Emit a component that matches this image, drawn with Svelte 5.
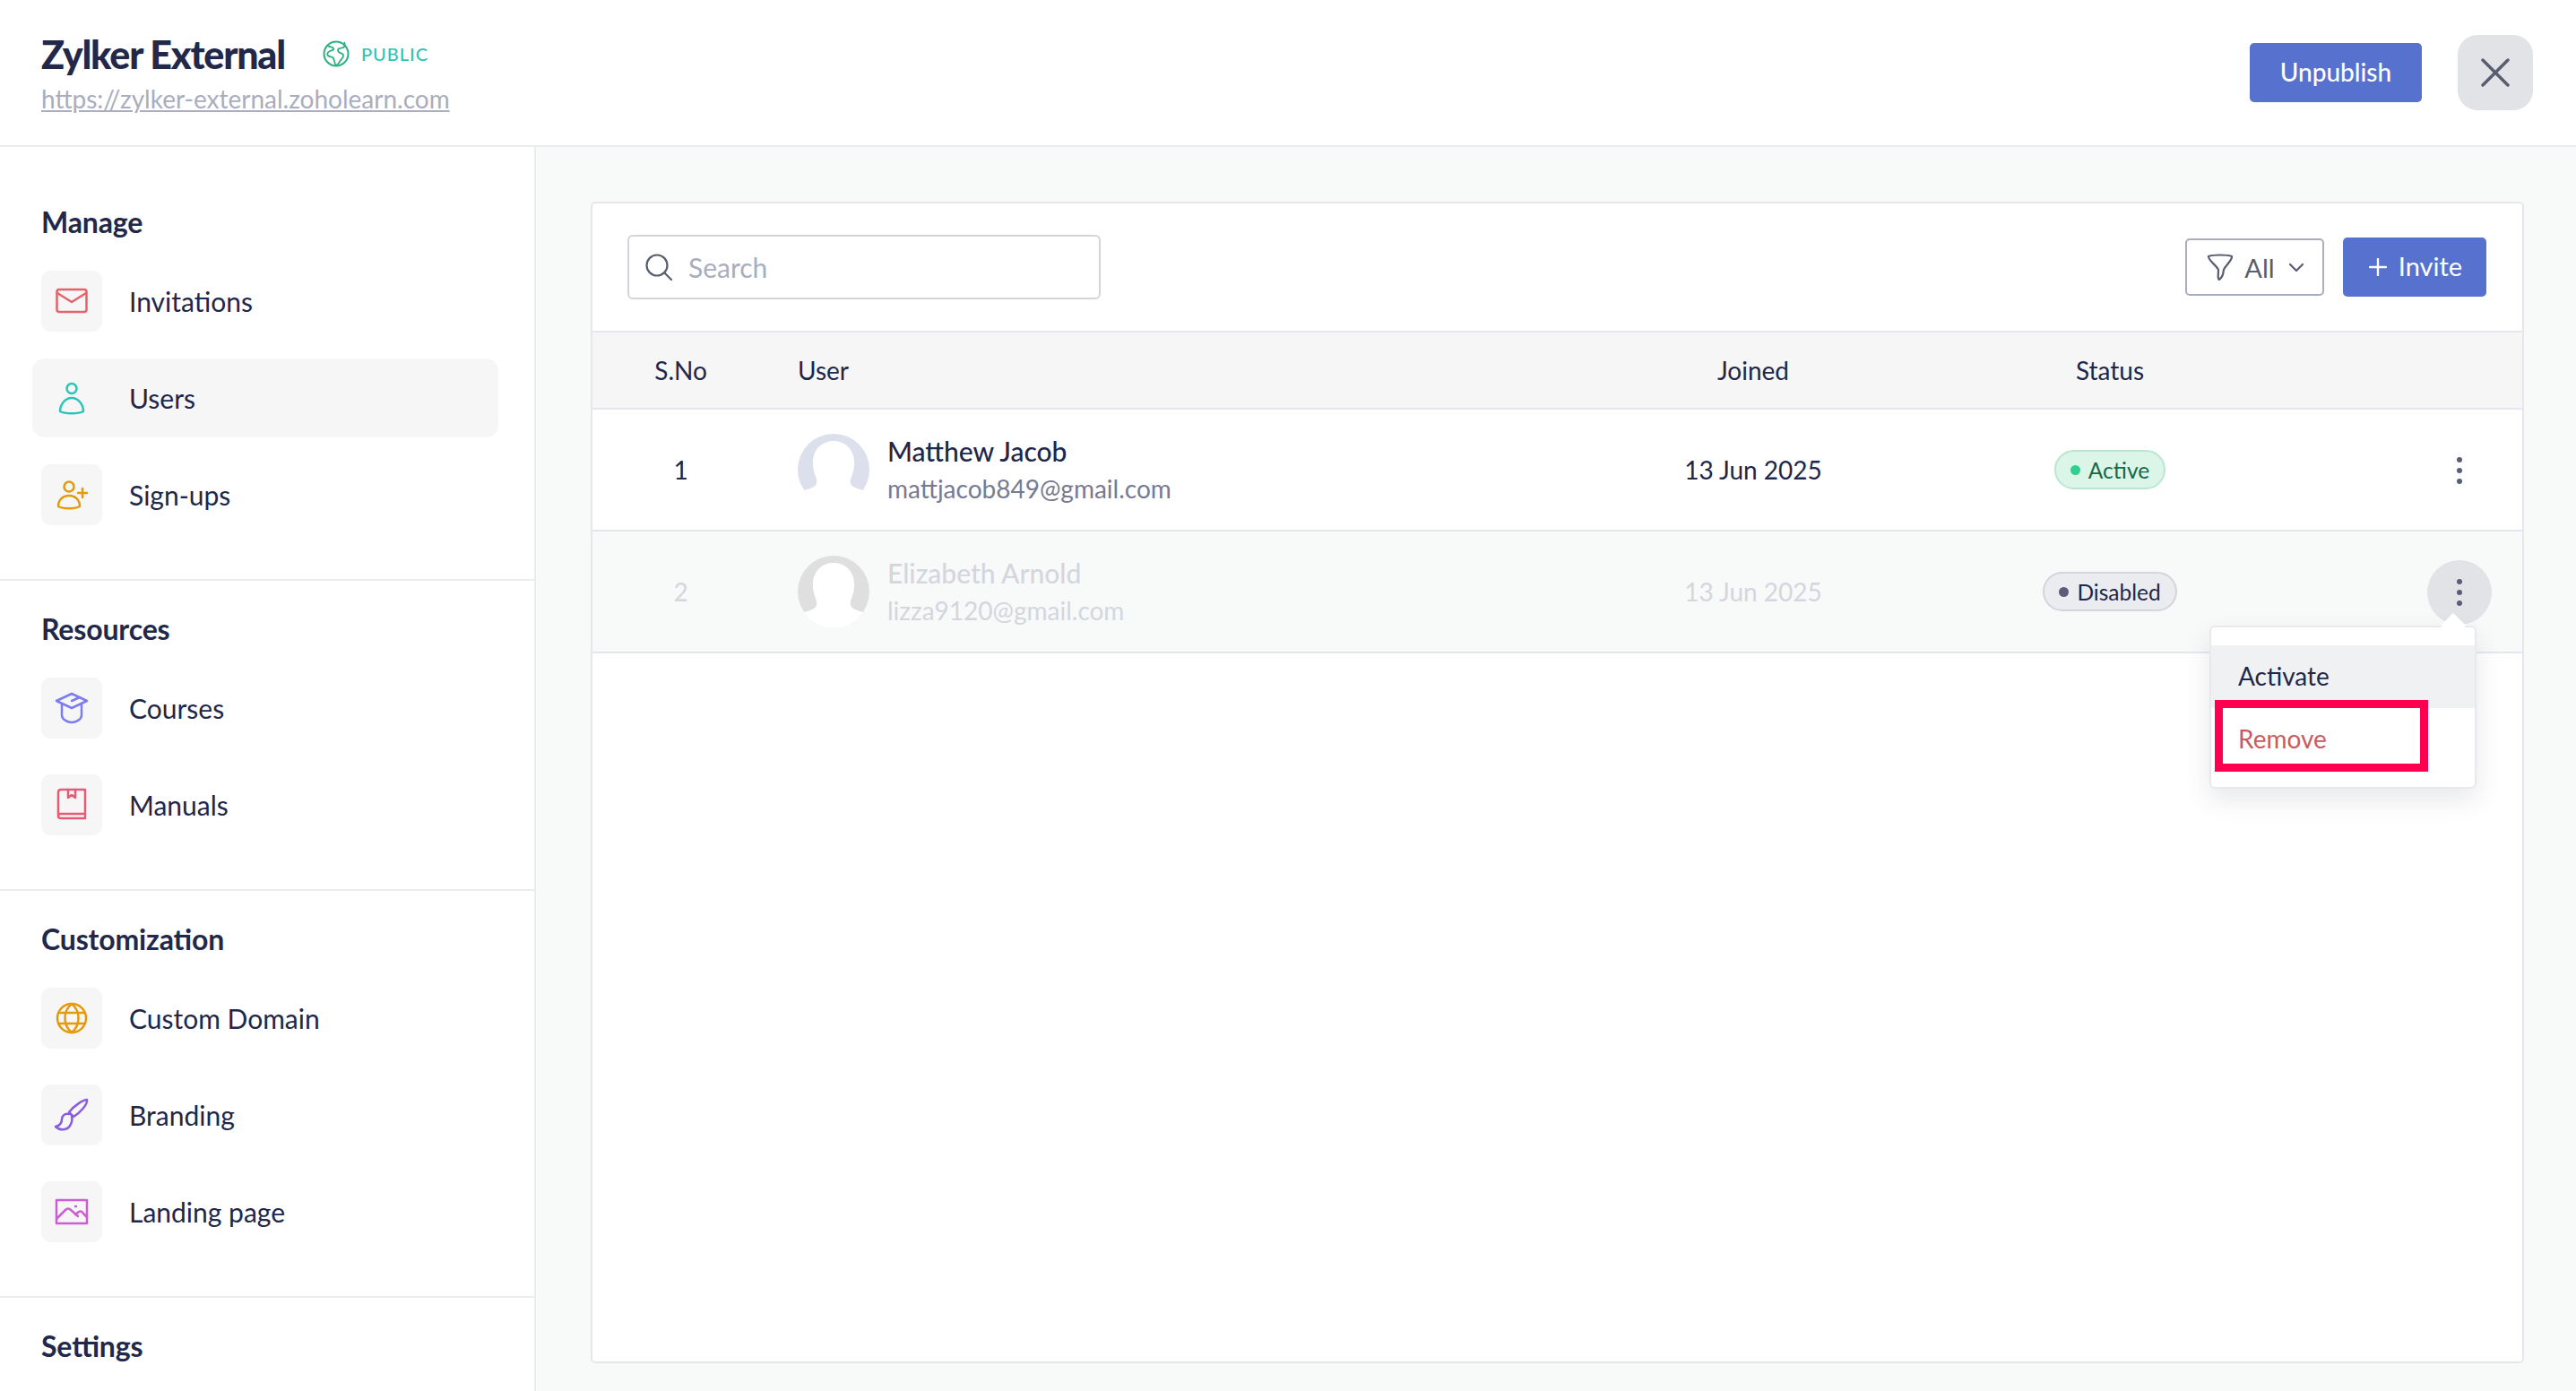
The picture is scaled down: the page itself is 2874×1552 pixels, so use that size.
<script>
  const groups = [
    {
      title: 'Manage',
      items: [
        { label: 'Invitations', color: '#e2636b', shapes: ['M6 7h28a2.500 2.500 0 0 1 2.500 2.500v20a2.500 2.500 0 0 1-2.500 2.500H6a2.500 2.500 0 0 1-2.500-2.500v-20A2.500 2.500 0 0 1 6 7Z', 'M4 11l16 10 16-10'] },
        { label: 'Users', color: '#2ac4b8', active: true, shapes: ['M20 4a5.500 5.500 0 1 1 0 11 5.500 5.500 0 0 1 0-11Z', 'M7 35c0-8 6-15 13-15s13 7 13 15c-5 3-21 3-26 0Z'] },
        { label: 'Sign-ups', color: '#e59a0c', shapes: ['M17 5.500a5.500 5.500 0 1 1 0 11 5.500 5.500 0 0 1 0-11Z', 'M5 33c0-7 5-12 12-12s12 5 12 12c-5 3-19 3-24 0Z', 'M32 13v10M27 18h10'] }
      ]
    },
    {
      title: 'Resources',
      items: [
        { label: 'Courses', color: '#7c7cf0', shapes: ['M20 4l17 8-17 8-17-8 17-8Z', 'M9 16v12c0 5 7 8 11 8s11-3 11-8V16', 'M20 12l9-4'] },
        { label: 'Manuals', color: '#e65a73', shapes: ['M5 33V6c0-2 1-3 3-3h27v32H8c-2 0-3-1-3-2.500S6 30 8 30h27', 'M16 3v9l4-3 4 3V3'] }
      ]
    },
    {
      title: 'Customization',
      items: [
        { label: 'Custom Domain', color: '#e59a0c', shapes: ['M20 4a16 16 0 1 1 0 32 16 16 0 0 1 0-32Z', 'M20 4c-10 8-10 24 0 32 10-8 10-24 0-32Z', 'M6 14h28M6 26h28'] },
        { label: 'Branding', color: '#8a5cdf', shapes: ['M37 3c-4 0-15 7-20 14l5 5c8-5 16-14 15-19Z', 'M17 19c-5-1-8 2-8 6 0 4-3 7-7 8 5 5 13 4 16-1 2-3 3-6 2-10'] },
        { label: 'Landing page', color: '#c95fd0', shapes: ['M3 7h34v26H3V7Z', 'M3 28l10-10c2-2 4-2 6 0l8 7', 'M24 23l4-3c2-1 4 0 5 2l4 4', 'M24 14h1'] }
      ]
    }
  ]

  const users = [
    { no: 1, name: 'Matthew Jacob', email: 'mattjacob849@gmail.com', joined: '13 Jun 2025', status: 'Active' },
    { no: 2, name: 'Elizabeth Arnold', email: 'lizza9120@gmail.com', joined: '13 Jun 2025', status: 'Disabled', off: true }
  ]
</script>

<div class="page">
  <header class="top">
    <div class="brand">
      <div class="brand-line">
        <h1>Zylker External</h1>
        <span class="public">
          <svg width="30" height="30" viewBox="0 0 30 30" fill="none" stroke="#2bb07f" stroke-width="2">
            <circle cx="15" cy="15" r="13.500" />
            <path d="M6 6c2 2 5 1 6 3s-2 2-4 3-4 3-2 5 5 1 6 3 1 6 3 8c3-1 4-5 6-7s3-5 1-6-5-1-5-4 4-2 6-3 2-4 1-6" stroke-width="1.800" />
          </svg>
          PUBLIC
        </span>
      </div>
      <a class="site" href="#site">https://zylker-external.zoholearn.com</a>
    </div>
    <div class="top-actions">
      <button class="primary unpublish">Unpublish</button>
      <button class="close" aria-label="Close">
        <svg width="32" height="32" viewBox="0 0 32 32" fill="none" stroke="#5a5d70" stroke-width="3.500" stroke-linecap="round">
          <path d="M2 2l28 28M30 2L2 30" />
        </svg>
      </button>
    </div>
  </header>

  <div class="body">
    <aside class="side">
      {#each groups as group}
        <section class="group">
          <h2>{group.title}</h2>
          <ul>
            {#each group.items as item}
              <li class:current={item.active}>
                <span class="tile">
                  <svg width="40" height="40" viewBox="0 0 40 40" fill="none" stroke={item.color} stroke-width="2.500" stroke-linecap="round" stroke-linejoin="round">
                    {#each item.shapes as d}
                      <path {d} />
                    {/each}
                  </svg>
                </span>
                {item.label}
              </li>
            {/each}
          </ul>
        </section>
      {/each}
      <section class="group">
        <h2>Settings</h2>
      </section>
    </aside>

    <main class="main">
      <div class="card">
        <div class="toolbar">
          <div class="search">
            <svg width="30" height="30" viewBox="0 0 30 30" fill="none" stroke="#5a5d70" stroke-width="2.200" stroke-linecap="round">
              <circle cx="13" cy="13" r="11.500" />
              <path d="M21.500 21.500L29 29" />
            </svg>
            <span>Search</span>
          </div>
          <button class="filter">
            <svg width="30" height="30" viewBox="0 0 30 30" fill="none" stroke="#5a5d70" stroke-width="2.200" stroke-linejoin="round">
              <path d="M2 3c6-2 20-2 26 0 1 4-7 10-9 15-1 4 0 7-5 11-2 0-1-7-1-11C11 13 1 7 2 3Z" />
            </svg>
            All
            <svg class="chev" width="18" height="11" viewBox="0 0 18 11" fill="none" stroke="#5a5d70" stroke-width="2.200" stroke-linecap="round" stroke-linejoin="round">
              <path d="M2 2l7 7 7-7" />
            </svg>
          </button>
          <button class="primary invite">
            <svg width="20" height="20" viewBox="0 0 20 20" fill="none" stroke="#fff" stroke-width="2.400" stroke-linecap="round">
              <path d="M10 1v18M1 10h18" />
            </svg>
            Invite
          </button>
        </div>

        <div class="row head">
          <span class="no">S.No</span>
          <span class="user-col">User</span>
          <span class="center">Joined</span>
          <span class="center">Status</span>
          <span></span>
        </div>

        {#each users as user}
          <div class="row item" class:off={user.off}>
            <span class="no">{user.no}</span>
            <div class="user-col who">
              <svg class="avatar" width="80" height="80" viewBox="0 0 80 80">
                <circle cx="40" cy="40" r="40" fill={user.off ? '#dfdfdf' : '#dce0ec'} />
                <path d="M40 8c12 0 22 8 23 22 1 8-2 14-3 18-2 4-2 8 2 11 3 2 8 3 11 4A40 40 0 0 1 7 63c3-1 8-2 11-4 4-3 4-7 2-11-1-4-4-10-3-18C18 16 28 8 40 8Z" fill="#fff" />
              </svg>
              <div class="names">
                <strong>{user.name}</strong>
                <span class="mail">{user.email}</span>
              </div>
            </div>
            <span class="center date">{user.joined}</span>
            <span class="center">
              <span class="pill {user.status.toLowerCase()}"><i></i>{user.status}</span>
            </span>
            <div class="more-cell">
              <button class="more" class:open={user.off} aria-label="More">
                <i></i><i></i><i></i>
              </button>
            </div>
          </div>
        {/each}

        <div class="menu">
          <span class="arrow"></span>
          <div class="menu-item hover">Activate</div>
          <div class="menu-item danger">Remove</div>
        </div>
        <div class="callout"></div>
      </div>
    </main>
  </div>
</div>

<style>
  :global(body) {
    margin: 0;
    background: #fff;
  }

  .page {
    width: 2874px;
    height: 1552px;
    overflow: hidden;
    font-family: Lato, 'Liberation Sans', sans-serif;
    color: #20274a;
    font-size: 28px;
    text-rendering: optimizeLegibility;
    font-feature-settings: 'liga' 1;
  }

  button {
    font: inherit;
    cursor: pointer;
  }

  /* top bar */
  .top {
    height: 162px;
    border-bottom: 2px solid #ebebf0;
    display: flex;
    align-items: center;
    justify-content: space-between;
    padding: 0 48px 0 46px;
  }

  .brand-line {
    display: flex;
    align-items: center;
    gap: 42px;
    height: 50px;
  }

  h1 {
    margin: 0;
    font-size: 43px;
    font-weight: 900;
    letter-spacing: -1.2px;
    color: #22284a;
  }

  .public {
    display: flex;
    align-items: center;
    gap: 13px;
    font-size: 20px;
    font-weight: 500;
    letter-spacing: 1px;
    color: #2ec4b6;
  }

  .site {
    display: block;
    margin-top: 8px;
    font-size: 28px;
    color: #a9adbd;
  }

  .top-actions {
    display: flex;
    align-items: center;
    gap: 40px;
  }

  .primary {
    height: 66px;
    border: 0;
    border-radius: 5px;
    background: #5771cf;
    color: #fff;
    display: flex;
    align-items: center;
    justify-content: center;
    padding: 0 0 3px;
  }

  .unpublish {
    width: 192px;
    font-size: 28px;
    font-weight: 500;
  }

  .close {
    width: 84px;
    height: 84px;
    border: 0;
    border-radius: 22px;
    background: #e2e3e7;
    display: flex;
    align-items: center;
    justify-content: center;
  }

  /* sidebar */
  .body {
    display: flex;
    height: 1388px;
  }

  .side {
    width: 596px;
    flex: none;
    border-right: 2px solid #ebebf0;
  }

  .group {
    padding: 34px 40px 50px 36px;
    border-bottom: 2px solid #ebebf0;
  }

  .group:first-child {
    padding-top: 64px;
  }

  .group:last-child {
    border-bottom: 0;
  }

  h2 {
    margin: 0 0 24px 10px;
    font-size: 32px;
    line-height: 40px;
    font-weight: 700;
    color: #22284a;
    letter-spacing: -0.15px;
  }

  ul {
    list-style: none;
    margin: 0;
    padding: 0;
    display: flex;
    flex-direction: column;
    gap: 20px;
  }

  li {
    height: 88px;
    padding-left: 10px;
    border-radius: 14px;
    display: flex;
    align-items: center;
    gap: 30px;
    font-size: 30px;
  }

  li.current {
    background: #f6f6f7;
  }

  .tile {
    width: 68px;
    height: 68px;
    border-radius: 10px;
    background: #f6f6f7;
    display: flex;
    align-items: center;
    justify-content: center;
  }

  /* main */
  .main {
    flex: 1;
    background: #f8f9f9;
    padding: 61px 58px 31px 61px;
  }

  .card {
    position: relative;
    height: 100%;
    box-sizing: border-box;
    background: #fff;
    border: 2px solid #e6e6ec;
    border-radius: 5px;
  }

  .toolbar {
    height: 142px;
    box-sizing: border-box;
    padding: 0 40px 0 39px;
    display: flex;
    align-items: center;
  }

  .search {
    width: 528px;
    height: 72px;
    box-sizing: border-box;
    border: 2px solid #d3d4dc;
    border-radius: 6px;
    padding-left: 18px;
    display: flex;
    align-items: center;
    gap: 18px;
    color: #a9adbd;
    font-size: 30px;
    margin-right: auto;
  }

  .filter {
    width: 155px;
    height: 64px;
    margin-right: 21px;
    box-sizing: border-box;
    background: #fff;
    border: 2px solid #a9adbd;
    border-radius: 5px;
    color: #5a5d70;
    font-size: 29px;
    display: flex;
    align-items: center;
    justify-content: center;
    gap: 12px;
    padding: 0 0 0 2px;
  }

  .chev {
    margin-left: 3px;
  }

  .invite {
    width: 160px;
    gap: 13px;
    font-size: 29px;
    padding-left: 2px;
  }

  .invite svg {
    margin-top: 3px;
  }

  .row {
    display: grid;
    grid-template-columns: 197px 898px 400px 396px 1fr;
    align-items: center;
    border-top: 2px solid #e6e6ec;
  }

  .head {
    height: 84px;
    background: #f6f6f7;
  }

  .item {
    height: 134px;
  }

  .item.off {
    border-bottom: 2px solid #e6e6ec;
  }

  .no,
  .center {
    text-align: center;
  }

  .user-col {
    padding-left: 32px;
  }

  .who {
    display: flex;
    align-items: center;
    gap: 20px;
  }

  .avatar {
    flex: none;
  }

  .names {
    display: flex;
    flex-direction: column;
    gap: 5px;
    margin-top: -1px;
  }

  strong {
    font-size: 30px;
    font-weight: 500;
    line-height: 38px;
  }

  .mail {
    font-size: 28px;
    line-height: 36px;
    color: #767b92;
  }

  .off {
    background: #f8f9f9;
  }

  .off .no,
  .off .date,
  .off strong,
  .off .mail {
    color: #d4d6de;
  }

  .pill {
    display: inline-flex;
    align-items: center;
    gap: 9px;
    height: 44px;
    box-sizing: border-box;
    padding: 0 16px;
    border: 2px solid;
    border-radius: 22px;
    font-size: 24.500px;
    vertical-align: middle;
  }

  .pill i {
    width: 11px;
    height: 11px;
    border-radius: 50%;
  }

  .active {
    background: #dcf5e9;
    border-color: #b8e6d0;
    color: #14694a;
  }

  .active i {
    background: #2fcf92;
  }

  .disabled {
    background: #ebecf0;
    border-color: #d3d4dc;
    color: #20274a;
  }

  .disabled i {
    background: #5a5d78;
  }

  .more-cell {
    display: flex;
    justify-content: flex-end;
    padding: 2px 34px 0 0;
  }

  .more {
    width: 72px;
    height: 72px;
    border: 0;
    border-radius: 50%;
    background: transparent;
    padding: 0;
    display: flex;
    flex-direction: column;
    align-items: center;
    justify-content: center;
    gap: 6px;
  }

  .more.open {
    background: #e2e3e7;
  }

  .more i {
    width: 6px;
    height: 6px;
    border-radius: 50%;
    background: #5a5d78;
  }

  /* dropdown hanging off the second row's menu button */
  .menu {
    position: absolute;
    left: 1804px;
    top: 471px;
    width: 298px;
    height: 182px;
    box-sizing: border-box;
    padding-top: 20px;
    background: #fff;
    border: 2px solid #e8e8ed;
    border-radius: 6px;
    box-shadow: 0 12px 28px rgba(60, 64, 90, 0.12);
  }

  .arrow {
    position: absolute;
    right: 14px;
    top: -12px;
    width: 20px;
    height: 20px;
    background: #fff;
    transform: rotate(45deg);
  }

  .menu-item {
    position: relative;
    height: 70px;
    display: flex;
    align-items: center;
    padding: 0 0 2px 30px;
    box-sizing: border-box;
    font-size: 28px;
  }

  .hover {
    background: #f0f1f3;
  }

  .danger {
    color: #cb5a5f;
  }

  /* annotation box drawn over the Remove item */
  .callout {
    position: absolute;
    left: 1810px;
    top: 554px;
    width: 238px;
    height: 80px;
    box-sizing: border-box;
    border: 9px solid #ff0050;
  }
</style>
